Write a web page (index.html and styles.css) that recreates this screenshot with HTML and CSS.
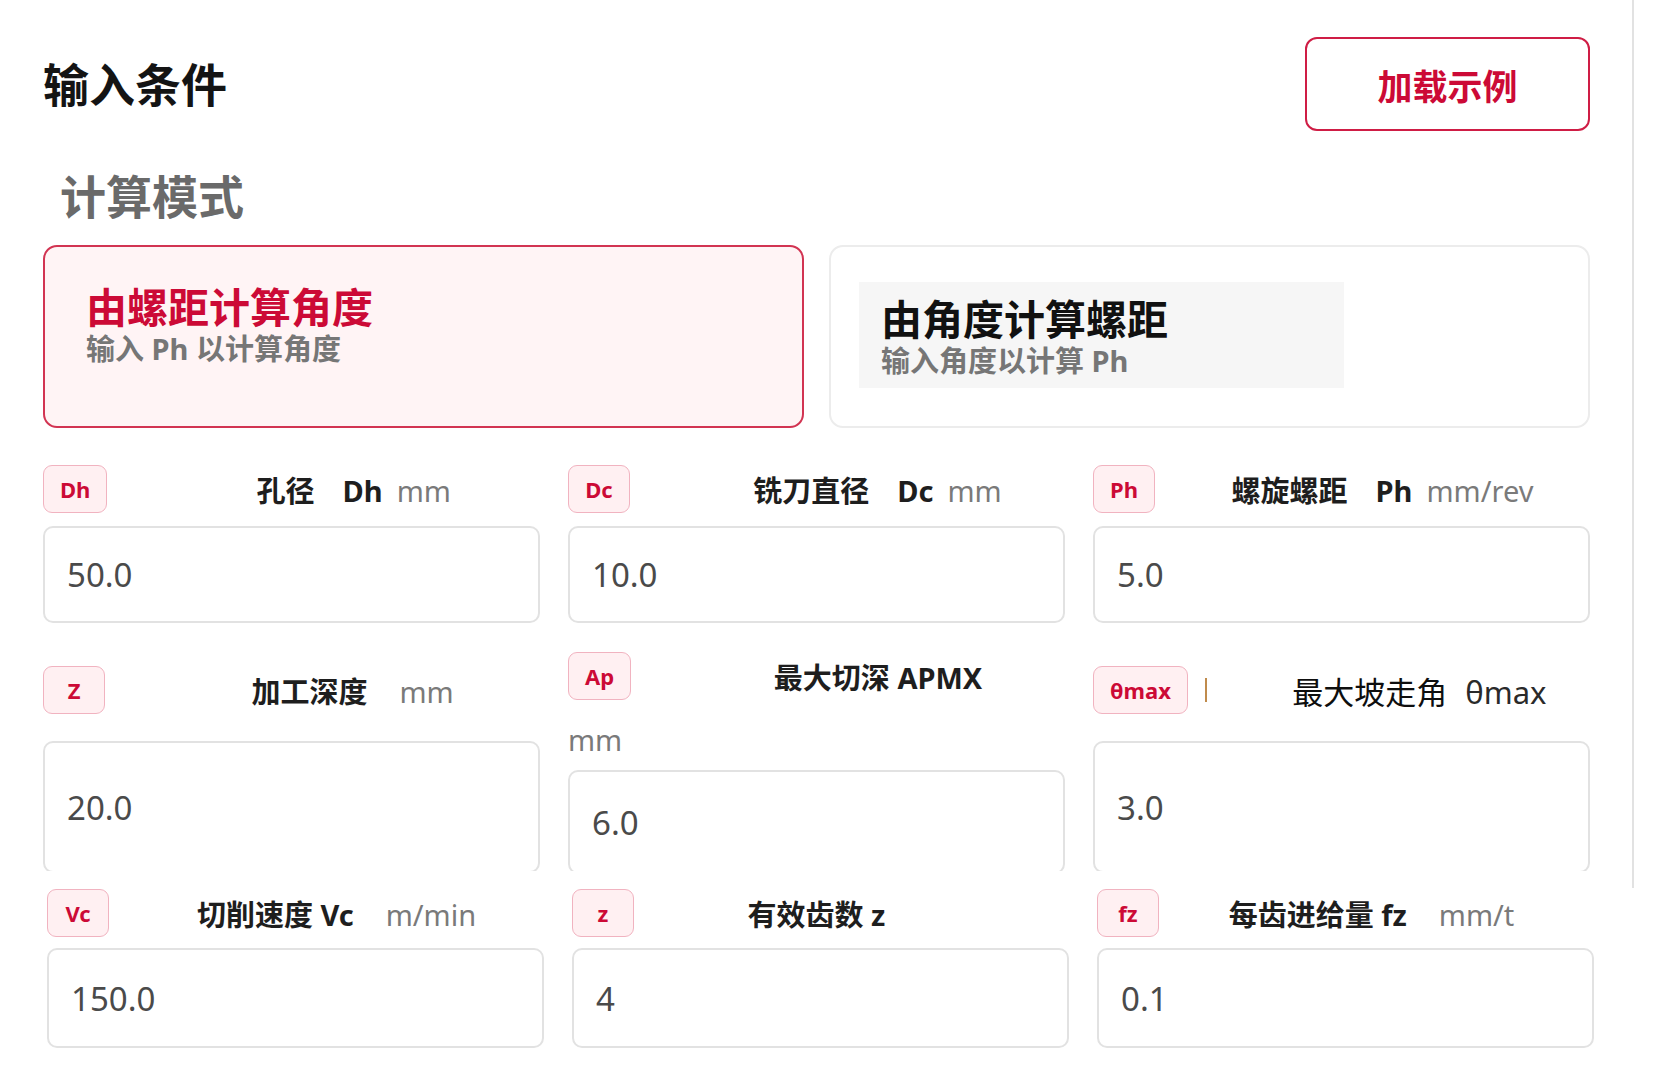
FILE: index.html
```html
<!DOCTYPE html>
<html lang="zh-CN">
<head>
<meta charset="utf-8">
<title>输入条件</title>
<link rel="stylesheet" href="styles.css">
</head>
<body>
<div class="panel">
  <header class="header">
    <h1 class="title">输入条件</h1>
    <button class="load-btn" type="button">加载示例</button>
  </header>

  <h2 class="subtitle">计算模式</h2>

  <div class="modes">
    <div class="mode mode-active">
      <div class="mode-title">由螺距计算角度</div>
      <div class="mode-sub">输入 Ph 以计算角度</div>
    </div>
    <div class="mode">
      <div class="mode-inner">
        <div class="mode-title mode-title-dark">由角度计算螺距</div>
        <div class="mode-sub">输入角度以计算 Ph</div>
      </div>
    </div>
  </div>

  <div class="field-row row-1">
    <div class="field">
      <div class="field-head">
        <span class="badge">Dh</span>
        <span class="label"><span class="cn">孔径</span><span class="sym">Dh</span><span class="unit">mm</span></span>
      </div>
      <div class="input">50.0</div>
    </div>
    <div class="field">
      <div class="field-head">
        <span class="badge">Dc</span>
        <span class="label"><span class="cn">铣刀直径</span><span class="sym">Dc</span><span class="unit">mm</span></span>
      </div>
      <div class="input">10.0</div>
    </div>
    <div class="field">
      <div class="field-head">
        <span class="badge">Ph</span>
        <span class="label label-tight"><span class="cn">螺旋螺距</span><span class="sym">Ph</span><span class="unit">mm/rev</span></span>
      </div>
      <div class="input">5.0</div>
    </div>
  </div>

  <div class="field-row row-2">
    <div class="field field-low">
      <div class="field-head">
        <span class="badge">Z</span>
        <span class="label"><span class="cn">加工深度</span><span class="unit unit-wide">mm</span></span>
      </div>
      <div class="input input-tall">20.0</div>
    </div>
    <div class="field">
      <div class="field-head">
        <span class="badge">Ap</span>
        <span class="label"><span class="cn">最大切深 APMX</span></span>
      </div>
      <div class="unit-line">mm</div>
      <div class="input input-mid">6.0</div>
    </div>
    <div class="field field-low">
      <div class="field-head">
        <span class="badge">θmax</span>
        <span class="caret"></span>
        <span class="label label-plain"><span class="cn">最大坡走角</span><span class="sym-plain">θmax</span></span>
      </div>
      <div class="input input-tall">3.0</div>
    </div>
  </div>
</div>

<div class="field-row row-3">
  <div class="field">
    <div class="field-head">
      <span class="badge">Vc</span>
      <span class="label label-mid"><span class="cn">切削速度 Vc</span><span class="unit unit-wide">m/min</span></span>
    </div>
    <div class="input">150.0</div>
  </div>
  <div class="field">
    <div class="field-head">
      <span class="badge">z</span>
      <span class="label label-left"><span class="cn">有效齿数 z</span></span>
    </div>
    <div class="input">4</div>
  </div>
  <div class="field">
    <div class="field-head">
      <span class="badge">fz</span>
      <span class="label label-flush"><span class="cn">每齿进给量 fz</span><span class="unit unit-wide">mm/t</span></span>
    </div>
    <div class="input">0.1</div>
  </div>
</div>
</body>
</html>
```

FILE: styles.css
```css
* { box-sizing: border-box; }

html, body {
  margin: 0;
  padding: 0;
  background: #ffffff;
}

body {
  font-family: "Noto Sans", "Noto Sans CJK SC", sans-serif;
  color: #1f1f1f;
  width: 1653px;
  overflow: hidden;
}

.panel {
  width: 1634px;
  height: 888px;
  padding: 0 42px 0 43px;
  border-right: 2px solid #e2e2e2;
  overflow: hidden;
}

.header {
  display: flex;
  justify-content: space-between;
  align-items: center;
  padding-top: 37px;
}

.title {
  margin: 0;
  font-size: 46px;
  line-height: 56px;
  font-weight: 700;
  color: #141414;
}

.load-btn {
  width: 285px;
  height: 94px;
  border: 2px solid #cf1d45;
  border-radius: 12px;
  background: #ffffff;
  color: #cc0a36;
  font-family: "Noto Sans CJK SC", "Noto Sans", sans-serif;
  font-size: 35px;
  font-weight: 700;
  padding: 0;
}

.subtitle {
  margin: 37px 0 0 17px;
  font-size: 46px;
  line-height: 56px;
  font-weight: 700;
  color: #6a6a6a;
}

.modes {
  display: grid;
  grid-template-columns: 1fr 1fr;
  column-gap: 25px;
  margin-top: 21px;
}

.mode {
  height: 183px;
  border: 2px solid #ececec;
  border-radius: 14px;
  background: #ffffff;
  padding: 35px 0 0 28px;
}

.mode-active {
  border-color: #d23452;
  background: #fff4f5;
  padding: 38px 0 0 41px;
}

.mode-inner {
  width: 485px;
  background: #f6f6f6;
  padding: 15px 0 9px 22px;
}

.mode-title {
  font-size: 41px;
  line-height: 44px;
  font-weight: 700;
  color: #cc0a36;
}

.mode-title-dark {
  color: #111111;
}

.mode-sub {
  margin-top: 2px;
  font-size: 29px;
  line-height: 36px;
  font-weight: 700;
  color: #767676;
}

.field-row {
  display: grid;
  grid-template-columns: repeat(3, 1fr);
  column-gap: 28px;
  align-items: start;
}

.row-1 {
  margin-top: 37px;
}

.row-2 {
  margin-top: 29px;
  height: 219px;
  overflow: hidden;
}

.row-3 {
  width: 1594px;
  padding-left: 47px;
  margin-top: 1px;
}

.field-low {
  padding-top: 14px;
}

.field-head {
  display: flex;
  align-items: center;
  height: 48px;
}

.badge {
  flex: none;
  min-width: 62px;
  height: 48px;
  padding: 0 16px;
  display: flex;
  align-items: center;
  justify-content: center;
  border: 1.5px solid #f1b3c0;
  border-radius: 9px;
  background: #fff0f2;
  color: #cc0a36;
  font-size: 22px;
  font-weight: 700;
}

.caret {
  flex: none;
  width: 2px;
  height: 24px;
  margin-left: 17px;
  background: #c08b4c;
}

.label {
  flex: 1;
  text-align: center;
  padding-left: 60px;
  font-size: 29px;
  white-space: nowrap;
}

.label-tight {
  padding-left: 20px;
}

.label-mid {
  padding-left: 20px;
}

.label-flush {
  padding-left: 0;
  padding-right: 10px;
}

.label-left {
  padding-left: 0;
  padding-right: 70px;
}

.cn {
  font-weight: 700;
  color: #1e1e1e;
}

.sym {
  font-weight: 700;
  color: #1e1e1e;
  margin-left: 28px;
}

.unit {
  font-weight: 400;
  color: #7a7a7a;
  margin-left: 14px;
}

.unit-wide {
  margin-left: 32px;
}

.label-plain {
  font-size: 31px;
  padding-left: 42px;
}

.label-plain .cn {
  font-weight: 400;
  color: #0e0e0e;
}

.sym-plain {
  font-weight: 400;
  color: #2a2a2a;
  margin-left: 18px;
}

.unit-line {
  margin-top: 22px;
  height: 36px;
  line-height: 36px;
  font-size: 29px;
  color: #7a7a7a;
}

.input {
  margin-top: 13px;
  height: 97px;
  border: 2px solid #e2e2e2;
  border-radius: 10px;
  background: #ffffff;
  display: flex;
  align-items: center;
  padding-left: 22px;
  font-size: 33px;
  color: #4a4a4a;
}

.row-3 .input {
  margin-top: 11px;
  height: 100px;
}

.input-tall {
  margin-top: 27px;
  height: 132px;
}

.input-mid {
  margin-top: 12px;
  height: 104px;
}
```
